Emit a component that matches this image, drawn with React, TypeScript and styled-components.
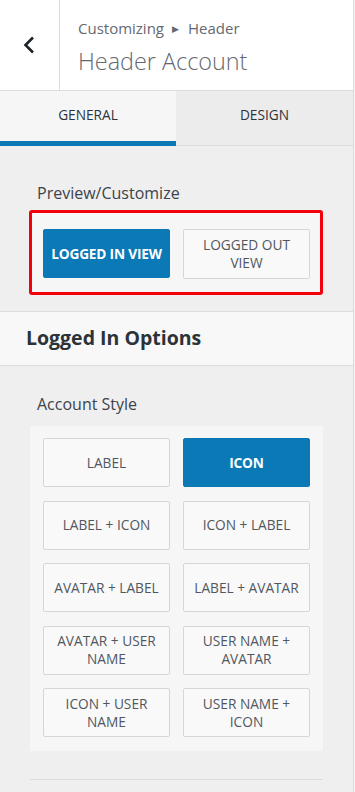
import styled, { createGlobalStyle } from "styled-components";

const GlobalStyle = createGlobalStyle`
  html, body {
    margin: 0;
    padding: 0;
    background: #f3f3f4;
    font-family: "Open Sans", "Noto Sans", sans-serif;
    -webkit-font-smoothing: antialiased;
  }
  * { box-sizing: border-box; }
`;

const Panel = styled.div`
  width: 354px;
  min-height: 792px;
  background: #efeff0;
  border-right: 1px solid #dcdcde;
`;

const Header = styled.header`
  display: flex;
  height: 91px;
  background: #fff;
  border-bottom: 1px solid #dcdcde;
`;

const BackButton = styled.button`
  width: 60px;
  border: none;
  border-right: 1px solid #dcdcde;
  background: #fff;
  display: flex;
  align-items: center;
  justify-content: center;
  padding: 0 2px 0 0;
  cursor: pointer;
`;

const TitleBlock = styled.div`
  display: flex;
  flex-direction: column;
  justify-content: center;
  padding: 2px 0 0 18px;
  color: #50575e;
`;

const Crumb = styled.div`
  font-size: 15px;
  line-height: 20px;
  color: #646970;
  & > span {
    font-size: 9px;
    margin: 0 9px 0 8px;
    position: relative;
    top: -2px;
  }
`;

const Title = styled.h1`
  margin: 6px 0 0;
  font-size: 23.4px;
  line-height: 28px;
  font-weight: 300;
  color: #646970;
`;

const Tabs = styled.nav`
  display: grid;
  grid-template-columns: 176px 1fr;
  height: 55px;
`;

const Tab = styled.button<{ $active?: boolean }>`
  border: none;
  font-family: inherit;
  font-size: 13.7px;
  color: #2c3338;
  text-transform: uppercase;
  padding: 0 0 4px;
  background: ${(p) => (p.$active ? "#f6f6f7" : "#ececed")};
  border-bottom: ${(p) => (p.$active ? "5px solid #0a79b5" : "1px solid #dcdcde")};
  ${(p) => (p.$active ? "" : "padding-bottom: 8px;")}
`;

const Control = styled.section<{ $top: number }>`
  padding: ${(p) => p.$top}px 30px 0 29px;
`;

const Label = styled.div`
  font-size: 16px;
  line-height: 22px;
  color: #3c434a;
  padding-left: 8px;
  margin-bottom: 6px;
`;

const Highlight = styled.div`
  border: 3px solid #f2000c;
  border-radius: 3px;
  background: #f6f6f7;
  padding: 16px 14px 13px 11px;
`;

const ButtonGrid = styled.div<{ $boxed?: boolean }>`
  display: grid;
  grid-template-columns: 127px 127px;
  column-gap: 13px;
  row-gap: 13.5px;
  ${(p) =>
    p.$boxed &&
    `
    background: #f6f6f7;
    padding: 12px 13px 14px 13px;
    margin: 11px 0 0 1px;
  `}
`;

const Choice = styled.button<{ $selected?: boolean }>`
  height: ${(p) => (p.$selected !== undefined ? "49px" : "50px")};
  border-radius: 2px;
  font-family: inherit;
  font-size: 13.7px;
  line-height: 18px;
  text-transform: uppercase;
  padding: 0 6px;
  border: 1px solid ${(p) => (p.$selected ? "#0a79b5" : "#d6d6d8")};
  background: ${(p) => (p.$selected ? "#0a79b5" : "#f9f9fa")};
  color: ${(p) => (p.$selected ? "#fff" : "#50575e")};
  font-weight: ${(p) => (p.$selected ? 700 : 400)};
  ${(p) => p.$selected && "white-space: nowrap; padding: 0; letter-spacing: -0.2px;"}
`;

const SectionTitle = styled.h2`
  margin: 16px 0 0;
  height: 55px;
  display: flex;
  align-items: center;
  padding: 0 0 2px 26px;
  font-size: 19.5px;
  font-weight: 700;
  color: #2c3338;
  background: #f8f8f9;
  border-top: 1px solid #dcdcde;
  border-bottom: 1px solid #dcdcde;
`;

const Divider = styled.hr`
  margin: 28px 0 0 1px;
  border: none;
  border-top: 1px solid #dcdcde;
`;

const styles = [
  "Label",
  "Icon",
  "Label + Icon",
  "Icon + Label",
  "Avatar + Label",
  "Label + Avatar",
  "Avatar + User Name",
  "User Name + Avatar",
  "Icon + User Name",
  "User Name + Icon",
];

function App() {
  return (
    <Panel>
      <GlobalStyle />
      <Header>
        <BackButton aria-label="Back">
          <svg width="12" height="18" viewBox="0 0 12 18">
            <path d="M10 1.5 L2.5 9 L10 16.5" fill="none" stroke="#1d2327" strokeWidth="2.6" />
          </svg>
        </BackButton>
        <TitleBlock>
          <Crumb>
            Customizing<span>▶</span>Header
          </Crumb>
          <Title>Header Account</Title>
        </TitleBlock>
      </Header>
      <Tabs>
        <Tab $active>General</Tab>
        <Tab>Design</Tab>
      </Tabs>

      <Control $top={36}>
        <Label>Preview/Customize</Label>
        <Highlight>
          <ButtonGrid>
            <Choice $selected>Logged In View</Choice>
            <Choice>Logged Out View</Choice>
          </ButtonGrid>
        </Highlight>
      </Control>

      <SectionTitle>Logged In Options</SectionTitle>

      <Control $top={27}>
        <Label>Account Style</Label>
        <ButtonGrid $boxed>
          {styles.map((s) => (
            <Choice key={s} $selected={s === "Icon"}>
              {s}
            </Choice>
          ))}
        </ButtonGrid>
        <Divider />
      </Control>
    </Panel>
  );
}

export default App;
